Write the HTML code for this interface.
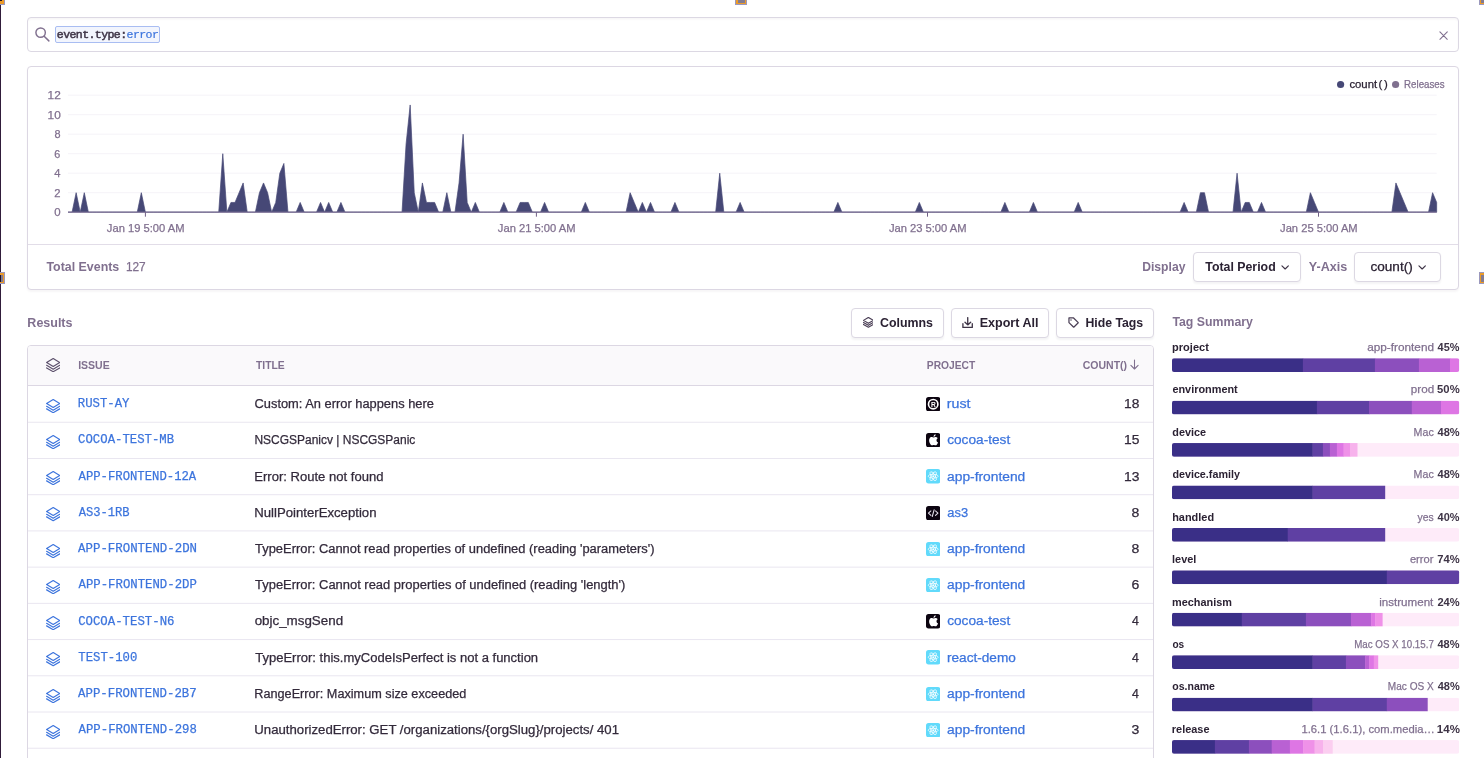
<!DOCTYPE html>
<html lang="en">
<head>
<meta charset="utf-8">
<title>Discover</title>
<style>
*{box-sizing:border-box;margin:0;padding:0}
html,body{width:1484px;height:758px;overflow:hidden;background:#fff}
body{font-family:"Liberation Sans",Arial,sans-serif;color:#2b2233;position:relative}
#root{position:absolute;left:0;top:0;width:1484px;height:758px;overflow:hidden;background:#fff;will-change:transform}
.abs{position:absolute}
.abs svg{display:block}
.t{position:absolute;height:16px;white-space:nowrap;transform-origin:0 50%}
.t b{font-weight:bold}
.edge{position:absolute;left:0;top:0;width:1px;height:758px;background:#301c3a}
.h{position:absolute;background:#ec9b28;border:1px solid #9a98bd}
.h i{position:absolute;background:#837b90;display:block}
.search{position:absolute;left:27px;top:17px;width:1432px;height:35px;border:1px solid #dcd8e3;border-radius:4px;background:#fff;box-shadow:inset 0 1.5px 2px rgba(43,34,51,0.04)}
.tok{position:absolute;left:55.2px;top:25.6px;width:104.4px;height:17.3px;border:1px solid #a9bdf2;border-radius:2px;background:#f2f5fd}
.panel{position:absolute;left:27px;top:66px;width:1432px;height:224px;border:1px solid #dcd7e3;border-radius:4px;background:#fff;box-shadow:0 1.5px 2px rgba(43,34,51,0.04)}
.pdiv{position:absolute;left:28px;top:244px;width:1430px;height:1px;background:#e2dde8}
.chart{position:absolute;left:0;top:0}
.btn{position:absolute;height:30px;border:1px solid #dcd8e3;border-radius:4px;background:#fff;box-shadow:0 1.5px 2px rgba(43,34,51,0.05)}
.btn svg{position:absolute}
.table{position:absolute;left:27px;top:345px;width:1127px;height:430px;border:1px solid #dcd7e3;border-radius:4px 4px 0 0;background:#fff}
.thead{position:absolute;left:28px;top:346px;width:1125px;height:40px;background:#faf9fb;border-bottom:1px solid #dcd7e3;border-radius:3px 3px 0 0}
.rl{position:absolute;left:28px;width:1125px;height:1px;background:#ebe8f0;margin-top:-0.5px}
.bar{position:absolute;left:1172px;width:287.2px;height:13.6px;background:#feebf9;border-radius:2px;overflow:hidden}
.bar i{position:absolute;top:0;height:13.6px;display:block}
</style>
</head>
<body>
<div id="root">
<div class="edge"></div>

<!-- selection handles from the capture tool -->
<div class="h" style="left:-2px;top:-3px;width:7px;height:7.5px"><i style="left:0;top:0;width:3px;height:3px;background:#1b1226"></i></div>
<div class="h" style="left:735px;top:-3px;width:12px;height:7.5px"><i style="left:2px;top:0;width:7px;height:4.6px"></i></div>
<div class="h" style="left:1479px;top:-3px;width:8px;height:7.5px"><i style="left:1px;top:0;width:6px;height:4.6px"></i></div>
<div class="h" style="left:-3px;top:272px;width:8px;height:12px"><i style="left:0;top:2px;width:3px;height:7px;background:#1b1226"></i><i style="left:3px;top:2px;width:2px;height:7px"></i></div>
<div class="h" style="left:1479px;top:272px;width:8px;height:12px"><i style="left:1px;top:2px;width:6px;height:7px"></i></div>

<!-- search -->
<div class="search"></div>
<svg class="abs" style="left:35.2px;top:27px" width="14.5" height="14.5" viewBox="0 0 16 16" fill="none" stroke="#80708f" stroke-width="1.6" stroke-linecap="round"><circle cx="6.2" cy="6.2" r="5.2"/><path d="M10.1 10.1 L15.3 15.3"/></svg>
<div class="tok"></div>
<span id="t84" class="t" style="left:56px;top:27px;font:normal 11.6px/16px 'Liberation Mono',monospace;color:#3e3446;transform:translateX(0.81px) scaleX(0.9971);letter-spacing:-0.6px;-webkit-text-stroke:0.25px #3e3446;"><span style="-webkit-text-stroke:0.5px #3e3446">event.type:</span><span style="color:#3c74dd;-webkit-text-stroke:0.2px #3c74dd">error</span></span>
<svg class="abs" style="left:1438.5px;top:31px" width="9.2" height="9.2" viewBox="0 0 10 10" fill="none" stroke="#80708f" stroke-width="1.2" stroke-linecap="round"><path d="M1 1 L9 9 M9 1 L1 9"/></svg>

<!-- chart panel -->
<div class="panel"></div>
<div class="pdiv"></div>
<svg class="chart" width="1484" height="250" viewBox="0 0 1484 250">
<line x1="68.0" x2="1436.7" y1="192.7" y2="192.7" stroke="#f5f3f8" stroke-width="1"/><line x1="68.0" x2="1436.7" y1="173.2" y2="173.2" stroke="#f5f3f8" stroke-width="1"/><line x1="68.0" x2="1436.7" y1="153.7" y2="153.7" stroke="#f5f3f8" stroke-width="1"/><line x1="68.0" x2="1436.7" y1="134.2" y2="134.2" stroke="#f5f3f8" stroke-width="1"/><line x1="68.0" x2="1436.7" y1="114.7" y2="114.7" stroke="#f5f3f8" stroke-width="1"/><line x1="68.0" x2="1436.7" y1="95.2" y2="95.2" stroke="#f5f3f8" stroke-width="1"/>
<path d="M68.00,212.20 L68.00,212.20 L72.07,212.20 L76.15,192.70 L80.22,212.20 L84.29,192.70 L88.37,212.20 L92.44,212.20 L96.51,212.20 L100.59,212.20 L104.66,212.20 L108.73,212.20 L112.81,212.20 L116.88,212.20 L120.95,212.20 L125.03,212.20 L129.10,212.20 L133.17,212.20 L137.25,212.20 L141.32,192.70 L145.39,212.20 L149.47,212.20 L153.54,212.20 L157.61,212.20 L161.69,212.20 L165.76,212.20 L169.84,212.20 L173.91,212.20 L177.98,212.20 L182.06,212.20 L186.13,212.20 L190.20,212.20 L194.28,212.20 L198.35,212.20 L202.42,212.20 L206.50,212.20 L210.57,212.20 L214.64,212.20 L218.72,212.20 L222.79,153.70 L226.86,212.20 L230.94,202.45 L235.01,202.45 L239.08,192.70 L243.16,182.95 L247.23,212.20 L251.30,212.20 L255.38,212.20 L259.45,192.70 L263.52,182.95 L267.60,192.70 L271.67,212.20 L275.74,202.45 L279.82,173.20 L283.89,163.45 L287.96,212.20 L292.04,212.20 L296.11,212.20 L300.18,202.45 L304.26,212.20 L308.33,212.20 L312.40,212.20 L316.48,212.20 L320.55,202.45 L324.62,212.20 L328.70,202.45 L332.77,212.20 L336.84,212.20 L340.92,202.45 L344.99,212.20 L349.06,212.20 L353.14,212.20 L357.21,212.20 L361.28,212.20 L365.36,212.20 L369.43,212.20 L373.51,212.20 L377.58,212.20 L381.65,212.20 L385.73,212.20 L389.80,212.20 L393.87,212.20 L397.95,212.20 L402.02,212.20 L406.09,143.95 L410.17,104.95 L414.24,192.70 L418.31,212.20 L422.39,182.95 L426.46,202.45 L430.53,202.45 L434.61,202.45 L438.68,212.20 L442.75,212.20 L446.83,192.70 L450.90,212.20 L454.97,212.20 L459.05,182.95 L463.12,134.20 L467.19,202.45 L471.27,212.20 L475.34,202.45 L479.41,212.20 L483.49,212.20 L487.56,212.20 L491.63,212.20 L495.71,212.20 L499.78,212.20 L503.85,202.45 L507.93,212.20 L512.00,212.20 L516.07,212.20 L520.15,202.45 L524.22,202.45 L528.29,202.45 L532.37,212.20 L536.44,212.20 L540.51,212.20 L544.59,202.45 L548.66,212.20 L552.73,212.20 L556.81,212.20 L560.88,212.20 L564.95,212.20 L569.03,212.20 L573.10,212.20 L577.18,212.20 L581.25,212.20 L585.32,202.45 L589.40,212.20 L593.47,212.20 L597.54,212.20 L601.62,212.20 L605.69,212.20 L609.76,212.20 L613.84,212.20 L617.91,212.20 L621.98,212.20 L626.06,212.20 L630.13,192.70 L634.20,202.45 L638.28,212.20 L642.35,202.45 L646.42,212.20 L650.50,202.45 L654.57,212.20 L658.64,212.20 L662.72,212.20 L666.79,212.20 L670.86,212.20 L674.94,202.45 L679.01,212.20 L683.08,212.20 L687.16,212.20 L691.23,212.20 L695.30,212.20 L699.38,212.20 L703.45,212.20 L707.52,212.20 L711.60,212.20 L715.67,212.20 L719.74,173.20 L723.82,212.20 L727.89,212.20 L731.96,212.20 L736.04,212.20 L740.11,202.45 L744.18,212.20 L748.26,212.20 L752.33,212.20 L756.40,212.20 L760.48,212.20 L764.55,212.20 L768.62,212.20 L772.70,212.20 L776.77,212.20 L780.85,212.20 L784.92,212.20 L788.99,212.20 L793.07,212.20 L797.14,212.20 L801.21,212.20 L805.29,212.20 L809.36,212.20 L813.43,212.20 L817.51,212.20 L821.58,212.20 L825.65,212.20 L829.73,212.20 L833.80,212.20 L837.87,202.45 L841.95,212.20 L846.02,212.20 L850.09,212.20 L854.17,212.20 L858.24,212.20 L862.31,212.20 L866.39,212.20 L870.46,212.20 L874.53,212.20 L878.61,212.20 L882.68,212.20 L886.75,212.20 L890.83,212.20 L894.90,212.20 L898.97,212.20 L903.05,212.20 L907.12,212.20 L911.19,212.20 L915.27,212.20 L919.34,202.45 L923.41,212.20 L927.49,212.20 L931.56,212.20 L935.63,212.20 L939.71,212.20 L943.78,212.20 L947.85,212.20 L951.93,212.20 L956.00,212.20 L960.07,212.20 L964.15,212.20 L968.22,212.20 L972.29,212.20 L976.37,212.20 L980.44,212.20 L984.52,212.20 L988.59,212.20 L992.66,212.20 L996.74,212.20 L1000.81,212.20 L1004.88,202.45 L1008.96,212.20 L1013.03,212.20 L1017.10,212.20 L1021.18,212.20 L1025.25,212.20 L1029.32,212.20 L1033.40,202.45 L1037.47,212.20 L1041.54,212.20 L1045.62,212.20 L1049.69,212.20 L1053.76,212.20 L1057.84,212.20 L1061.91,212.20 L1065.98,212.20 L1070.06,212.20 L1074.13,212.20 L1078.20,202.45 L1082.28,212.20 L1086.35,212.20 L1090.42,212.20 L1094.50,212.20 L1098.57,212.20 L1102.64,212.20 L1106.72,212.20 L1110.79,212.20 L1114.86,212.20 L1118.94,212.20 L1123.01,212.20 L1127.08,212.20 L1131.16,212.20 L1135.23,212.20 L1139.30,212.20 L1143.38,212.20 L1147.45,212.20 L1151.52,212.20 L1155.60,212.20 L1159.67,212.20 L1163.74,212.20 L1167.82,212.20 L1171.89,212.20 L1175.96,212.20 L1180.04,212.20 L1184.11,202.45 L1188.19,212.20 L1192.26,212.20 L1196.33,212.20 L1200.41,192.70 L1204.48,192.70 L1208.55,212.20 L1212.63,212.20 L1216.70,212.20 L1220.77,212.20 L1224.85,212.20 L1228.92,212.20 L1232.99,212.20 L1237.07,173.20 L1241.14,212.20 L1245.21,202.45 L1249.29,202.45 L1253.36,212.20 L1257.43,212.20 L1261.51,202.45 L1265.58,212.20 L1269.65,212.20 L1273.73,212.20 L1277.80,212.20 L1281.87,212.20 L1285.95,212.20 L1290.02,212.20 L1294.09,212.20 L1298.17,212.20 L1302.24,212.20 L1306.31,212.20 L1310.39,192.70 L1314.46,202.45 L1318.53,212.20 L1322.61,212.20 L1326.68,212.20 L1330.75,212.20 L1334.83,212.20 L1338.90,212.20 L1342.97,212.20 L1347.05,212.20 L1351.12,212.20 L1355.19,212.20 L1359.27,212.20 L1363.34,212.20 L1367.41,212.20 L1371.49,212.20 L1375.56,212.20 L1379.63,212.20 L1383.71,212.20 L1387.78,212.20 L1391.86,212.20 L1395.93,182.95 L1400.00,192.70 L1404.08,202.45 L1408.15,212.20 L1412.22,212.20 L1416.30,212.20 L1420.37,212.20 L1424.44,212.20 L1428.52,212.20 L1432.59,192.70 L1436.66,202.45 L1436.66,212.20 Z" fill="#464876" stroke="#464876" stroke-width="0.7" stroke-linejoin="miter" stroke-miterlimit="6"/>
<line x1="68.0" x2="1436.7" y1="212.2" y2="212.2" stroke="#8a7c9e" stroke-width="1"/>
<line x1="145.4" x2="145.4" y1="212.2" y2="216.7" stroke="#6f5f85" stroke-width="1"/><line x1="536.4" x2="536.4" y1="212.2" y2="216.7" stroke="#6f5f85" stroke-width="1"/><line x1="927.5" x2="927.5" y1="212.2" y2="216.7" stroke="#6f5f85" stroke-width="1"/><line x1="1318.5" x2="1318.5" y1="212.2" y2="216.7" stroke="#6f5f85" stroke-width="1"/>
<circle cx="1340.6" cy="84.5" r="3.6" fill="#464876"/>
<circle cx="1395.6" cy="84.5" r="3.6" fill="#80708f"/>
</svg>
<span id="t1" class="t" style="left:54px;top:204px;font:normal 11.2px/16px 'Liberation Sans',Arial,sans-serif;color:#80708f;transform:translateX(0.37px) scaleX(1.0225);-webkit-text-stroke:0.25px #80708f;">0</span>
<span id="t2" class="t" style="left:54px;top:185px;font:normal 11.2px/16px 'Liberation Sans',Arial,sans-serif;color:#80708f;transform:translateX(0.26px) scaleX(1.0024);-webkit-text-stroke:0.25px #80708f;">2</span>
<span id="t3" class="t" style="left:54px;top:165px;font:normal 11.2px/16px 'Liberation Sans',Arial,sans-serif;color:#80708f;transform:translateX(0.28px) scaleX(0.9993);-webkit-text-stroke:0.25px #80708f;">4</span>
<span id="t4" class="t" style="left:54px;top:146px;font:normal 11.2px/16px 'Liberation Sans',Arial,sans-serif;color:#80708f;transform:translateX(0.31px) scaleX(0.9653);-webkit-text-stroke:0.25px #80708f;">6</span>
<span id="t5" class="t" style="left:54px;top:126px;font:normal 11.2px/16px 'Liberation Sans',Arial,sans-serif;color:#80708f;transform:translateX(0.51px) scaleX(0.9729);-webkit-text-stroke:0.25px #80708f;">8</span>
<span id="t6" class="t" style="left:47px;top:107px;font:normal 11.2px/16px 'Liberation Sans',Arial,sans-serif;color:#80708f;transform:translateX(0.54px) scaleX(1.0586);-webkit-text-stroke:0.25px #80708f;">10</span>
<span id="t7" class="t" style="left:47px;top:87px;font:normal 11.2px/16px 'Liberation Sans',Arial,sans-serif;color:#80708f;transform:translateX(0.61px) scaleX(1.0580);-webkit-text-stroke:0.25px #80708f;">12</span>
<span id="t8" class="t" style="left:106px;top:220px;font:normal 11.0px/16px 'Liberation Sans',Arial,sans-serif;color:#80708f;transform:translateX(0.86px) scaleX(1.0152);-webkit-text-stroke:0.25px #80708f;">Jan 19 5:00 AM</span>
<span id="t9" class="t" style="left:497px;top:220px;font:normal 11.0px/16px 'Liberation Sans',Arial,sans-serif;color:#80708f;transform:translateX(0.86px) scaleX(1.0161);-webkit-text-stroke:0.25px #80708f;">Jan 21 5:00 AM</span>
<span id="t10" class="t" style="left:888px;top:220px;font:normal 11.0px/16px 'Liberation Sans',Arial,sans-serif;color:#80708f;transform:translateX(0.89px) scaleX(1.0156);-webkit-text-stroke:0.25px #80708f;">Jan 23 5:00 AM</span>
<span id="t11" class="t" style="left:1280px;top:220px;font:normal 11.0px/16px 'Liberation Sans',Arial,sans-serif;color:#80708f;transform:translateX(0.08px) scaleX(1.0149);-webkit-text-stroke:0.25px #80708f;">Jan 25 5:00 AM</span>
<span id="t12" class="t" style="left:1349px;top:77px;font:normal 10.4px/16px 'Liberation Sans',Arial,sans-serif;color:#2b2233;transform:translateX(0.41px) scaleX(1.0898);-webkit-text-stroke:0.25px #2b2233;">count<span style="letter-spacing:1.6px;margin-left:1.2px">()</span></span>
<span id="t13" class="t" style="left:1404px;top:77px;font:normal 10.4px/16px 'Liberation Sans',Arial,sans-serif;color:#80708f;transform:translateX(0.09px) scaleX(0.9352);-webkit-text-stroke:0.25px #80708f;">Releases</span>

<span id="t85" class="t" style="left:46px;top:259px;font:bold 12.0px/16px 'Liberation Sans',Arial,sans-serif;color:#80708f;transform:translateX(0.47px) scaleX(1.0329);">Total Events</span>
<span id="t86" class="t" style="left:125px;top:259px;font:normal 12.0px/16px 'Liberation Sans',Arial,sans-serif;color:#80708f;transform:translateX(0.89px) scaleX(0.9878);-webkit-text-stroke:0.25px #80708f;">127</span>
<span id="t87" class="t" style="left:1142px;top:259px;font:bold 12.1px/16px 'Liberation Sans',Arial,sans-serif;color:#80708f;transform:translateX(0.23px) scaleX(1.0036);">Display</span>
<div class="btn" style="left:1193px;top:252px;width:108px"><svg style="left:87.0px;top:12.3px" width="8.3" height="4.8" viewBox="0 0 10 6" fill="none" stroke="#3e3446" stroke-width="1.45" stroke-linecap="round" stroke-linejoin="round"><path d="M1 1 L5 5 L9 1"/></svg></div>
<span id="t88" class="t" style="left:1205px;top:259px;font:bold 12.0px/16px 'Liberation Sans',Arial,sans-serif;color:#2b2233;transform:translateX(0.28px) scaleX(1.0285);">Total Period</span>
<span id="t89" class="t" style="left:1308px;top:259px;font:bold 12.1px/16px 'Liberation Sans',Arial,sans-serif;color:#80708f;transform:translateX(0.78px) scaleX(1.0401);">Y-Axis</span>
<div class="btn" style="left:1354px;top:252px;width:87px"><svg style="left:63.2px;top:12.3px" width="8.3" height="4.8" viewBox="0 0 10 6" fill="none" stroke="#3e3446" stroke-width="1.45" stroke-linecap="round" stroke-linejoin="round"><path d="M1 1 L5 5 L9 1"/></svg></div>
<span id="t90" class="t" style="left:1370px;top:259px;font:normal 12.0px/16px 'Liberation Sans',Arial,sans-serif;color:#2b2233;transform:translateX(0.46px) scaleX(1.1305);-webkit-text-stroke:0.25px #2b2233;">count()</span>

<!-- results header -->
<span id="t91" class="t" style="left:27px;top:315px;font:bold 12.0px/16px 'Liberation Sans',Arial,sans-serif;color:#80708f;transform:translateX(0.36px) scaleX(1.0406);">Results</span>
<div class="btn" style="left:851px;top:308px;width:93px"><svg style="left:10.5px;top:7.9px" viewBox="0 0 16 16" width="10.8" height="10.8" fill="none" stroke="#4a3e55" stroke-width="1.7" stroke-linejoin="round" stroke-linecap="round"><path d="M8 0.6 L15.3 5 L8 9.4 L0.7 5 Z"/><path d="M0.7 8.1 L8 12.4 L15.3 8.1"/><path d="M0.7 11 L8 15.2 L15.3 11"/></svg></div>
<span id="t92" class="t" style="left:879px;top:315px;font:bold 12.1px/16px 'Liberation Sans',Arial,sans-serif;color:#2b2233;transform:translateX(0.99px) scaleX(1.0245);">Columns</span>
<div class="btn" style="left:951px;top:308px;width:98px"><svg style="left:9.9px;top:7.7px" width="11.2" height="11.2" viewBox="0 0 16 16" fill="none" stroke="#3e3446" stroke-width="1.9" stroke-linecap="round" stroke-linejoin="round"><path d="M8.2 0.9 L8.2 11.2 M4.3 7.4 L8.2 11.3 L12.4 7.4 M1.3 9.5 L1.3 15 L14.7 15 L14.7 9.5"/></svg></div>
<span id="t93" class="t" style="left:979px;top:315px;font:bold 12.1px/16px 'Liberation Sans',Arial,sans-serif;color:#2b2233;transform:translateX(0.64px) scaleX(1.0380);">Export All</span>
<div class="btn" style="left:1056px;top:308px;width:98px"><svg style="left:10.6px;top:7.7px" width="11" height="11" viewBox="0 0 16 16" fill="none" stroke="#4a3f55" stroke-width="1.8" stroke-linecap="round" stroke-linejoin="round"><path d="M1.4 1.4 L8.1 1.4 L14.6 7.9 Q15 8.3 14.6 8.7 L8.7 14.6 Q8.3 15 7.9 14.6 L1.4 8.1 Z"/><circle cx="4.4" cy="4.5" r="1.1" fill="#4a3f55" stroke="none"/></svg></div>
<span id="t94" class="t" style="left:1085px;top:315px;font:bold 12.1px/16px 'Liberation Sans',Arial,sans-serif;color:#2b2233;transform:translateX(0.39px) scaleX(1.0156);">Hide Tags</span>

<!-- table -->
<div class="table"></div>
<div class="thead"></div>
<div class="abs" style="left:45.8px;top:357.7px"><svg viewBox="0 0 16 16" width="14.4" height="14.4" fill="none" stroke="#5b4f6b" stroke-width="1.3" stroke-linejoin="round" stroke-linecap="round"><path d="M8 0.6 L15.3 5 L8 9.4 L0.7 5 Z"/><path d="M0.7 8.1 L8 12.4 L15.3 8.1"/><path d="M0.7 11 L8 15.2 L15.3 11"/></svg></div>
<span id="t95" class="t" style="left:78px;top:357px;font:bold 11px/16px 'Liberation Sans',Arial,sans-serif;color:#80708f;transform:translateX(0.15px) scaleX(0.9567);">ISSUE</span>
<span id="t96" class="t" style="left:255px;top:357px;font:bold 11px/16px 'Liberation Sans',Arial,sans-serif;color:#80708f;transform:translateX(0.94px) scaleX(0.9400);">TITLE</span>
<span id="t97" class="t" style="left:926px;top:357px;font:bold 11px/16px 'Liberation Sans',Arial,sans-serif;color:#80708f;transform:translateX(0.85px) scaleX(0.9315);">PROJECT</span>
<span id="t98" class="t" style="left:1082px;top:357px;font:bold 11px/16px 'Liberation Sans',Arial,sans-serif;color:#80708f;transform:translateX(0.67px) scaleX(0.9558);">COUNT()</span>
<svg class="abs" style="left:1129.6px;top:359px" width="9" height="11" viewBox="0 0 10 12" fill="none" stroke="#80708f" stroke-width="1.2" stroke-linecap="round" stroke-linejoin="round"><path d="M5 1 L5 11 M1 7 L5 11 L9 7"/></svg>
<div class="abs" style="left:45.8px;top:398.7px"><svg viewBox="0 0 16 16" width="14.4" height="14.4" fill="none" stroke="#3c74dd" stroke-width="1.35" stroke-linejoin="round" stroke-linecap="round"><path d="M8 0.6 L15.3 5 L8 9.4 L0.7 5 Z"/><path d="M0.7 8.1 L8 12.4 L15.3 8.1"/><path d="M0.7 11 L8 15.2 L15.3 11"/></svg></div>
<span id="t14" class="t" style="left:77px;top:396px;font:normal 13.1px/16px 'Liberation Mono',monospace;color:#3c74dd;transform:translateX(0.82px) scaleX(0.9386);-webkit-text-stroke:0.25px #3c74dd;">RUST-AY</span>
<span id="t15" class="t" style="left:254px;top:396px;font:normal 12.5px/16px 'Liberation Sans',Arial,sans-serif;color:#332a3b;transform:translateX(0.55px) scaleX(1.0282);-webkit-text-stroke:0.25px #332a3b;">Custom: An error happens here</span>
<div class="abs" style="left:926.1px;top:396.9px"><svg viewBox="0 0 20 20" width="14.4" height="14.4"><rect width="20" height="20" rx="3.6" fill="#0c0410"/><circle cx="10" cy="10" r="6.5" fill="none" stroke="#fff" stroke-width="2.3"/><text x="10.1" y="13.3" text-anchor="middle" font-family="Liberation Sans, sans-serif" font-weight="bold" font-size="9.2" fill="#fff">R</text></svg></div>
<span id="t16" class="t" style="left:946px;top:396px;font:normal 12.5px/16px 'Liberation Sans',Arial,sans-serif;color:#3c74dd;transform:translateX(0.87px) scaleX(1.1373);-webkit-text-stroke:0.25px #3c74dd;">rust</span>
<span id="t17" class="t" style="left:1124px;top:396px;font:normal 12.5px/16px 'Liberation Sans',Arial,sans-serif;color:#332a3b;transform:translateX(0.02px) scaleX(1.1019);-webkit-text-stroke:0.25px #332a3b;">18</span>
<div class="abs" style="left:45.8px;top:434.9px"><svg viewBox="0 0 16 16" width="14.4" height="14.4" fill="none" stroke="#3c74dd" stroke-width="1.35" stroke-linejoin="round" stroke-linecap="round"><path d="M8 0.6 L15.3 5 L8 9.4 L0.7 5 Z"/><path d="M0.7 8.1 L8 12.4 L15.3 8.1"/><path d="M0.7 11 L8 15.2 L15.3 11"/></svg></div>
<span id="t18" class="t" style="left:78px;top:432px;font:normal 13.1px/16px 'Liberation Mono',monospace;color:#3c74dd;transform:translateX(0.09px) scaleX(0.9398);-webkit-text-stroke:0.25px #3c74dd;">COCOA-TEST-MB</span>
<span id="t19" class="t" style="left:254px;top:432px;font:normal 12.5px/16px 'Liberation Sans',Arial,sans-serif;color:#332a3b;transform:translateX(0.42px) scaleX(0.9584);-webkit-text-stroke:0.25px #332a3b;">NSCGSPanicv | NSCGSPanic</span>
<div class="abs" style="left:926.1px;top:433.1px"><svg viewBox="0 0 20 20" width="14.4" height="14.4"><rect width="20" height="20" rx="3.6" fill="#0c0410"/><path fill="#fff" transform="translate(10 10) scale(1.2) translate(-10.1 -10.55)" d="M13.9 10.6c0-1.6 1.3-2.3 1.4-2.4-.8-1.1-1.9-1.3-2.3-1.3-1-.1-1.9.6-2.4.6-.5 0-1.2-.6-2.1-.6-1.1 0-2.1.6-2.6 1.6-1.1 1.9-.3 4.8.8 6.4.5.8 1.2 1.6 2 1.6.8 0 1.1-.5 2.1-.5s1.2.5 2.1.5c.9 0 1.4-.8 1.9-1.6.6-.9.9-1.7.9-1.8-.1 0-1.8-.700-1.8-2.5zM12.3 5.8c.4-.5.7-1.3.6-2-.6 0-1.4.4-1.8.9-.4.5-.8 1.2-.7 1.9.7.1 1.4-.300 1.9-.800z"/></svg></div>
<span id="t20" class="t" style="left:947px;top:432px;font:normal 12.5px/16px 'Liberation Sans',Arial,sans-serif;color:#3c74dd;transform:translateX(0.19px) scaleX(1.0934);-webkit-text-stroke:0.25px #3c74dd;">cocoa-test</span>
<span id="t21" class="t" style="left:1123px;top:432px;font:normal 12.5px/16px 'Liberation Sans',Arial,sans-serif;color:#332a3b;transform:translateX(0.97px) scaleX(1.1057);-webkit-text-stroke:0.25px #332a3b;">15</span>
<div class="abs" style="left:45.8px;top:471.1px"><svg viewBox="0 0 16 16" width="14.4" height="14.4" fill="none" stroke="#3c74dd" stroke-width="1.35" stroke-linejoin="round" stroke-linecap="round"><path d="M8 0.6 L15.3 5 L8 9.4 L0.7 5 Z"/><path d="M0.7 8.1 L8 12.4 L15.3 8.1"/><path d="M0.7 11 L8 15.2 L15.3 11"/></svg></div>
<span id="t22" class="t" style="left:78px;top:469px;font:normal 13.1px/16px 'Liberation Mono',monospace;color:#3c74dd;transform:translateX(0.56px) scaleX(0.9356);-webkit-text-stroke:0.25px #3c74dd;">APP-FRONTEND-12A</span>
<span id="t23" class="t" style="left:254px;top:469px;font:normal 12.5px/16px 'Liberation Sans',Arial,sans-serif;color:#332a3b;transform:translateX(0.23px) scaleX(1.0448);-webkit-text-stroke:0.25px #332a3b;">Error: Route not found</span>
<div class="abs" style="left:926.1px;top:469.3px"><svg viewBox="0 0 20 20" width="14.4" height="14.4"><rect width="20" height="20" rx="3.6" fill="#61dafb"/><g fill="none" stroke="#fff" stroke-width="1"><ellipse cx="10" cy="10" rx="7" ry="2.7"/><ellipse cx="10" cy="10" rx="7" ry="2.7" transform="rotate(60 10 10)"/><ellipse cx="10" cy="10" rx="7" ry="2.7" transform="rotate(120 10 10)"/></g><circle cx="10" cy="10" r="1.3" fill="#fff"/></svg></div>
<span id="t24" class="t" style="left:947px;top:469px;font:normal 12.5px/16px 'Liberation Sans',Arial,sans-serif;color:#3c74dd;transform:translateX(0.10px) scaleX(1.1029);-webkit-text-stroke:0.25px #3c74dd;">app-frontend</span>
<span id="t25" class="t" style="left:1123px;top:469px;font:normal 12.5px/16px 'Liberation Sans',Arial,sans-serif;color:#332a3b;transform:translateX(0.95px) scaleX(1.1088);-webkit-text-stroke:0.25px #332a3b;">13</span>
<div class="abs" style="left:45.8px;top:507.4px"><svg viewBox="0 0 16 16" width="14.4" height="14.4" fill="none" stroke="#3c74dd" stroke-width="1.35" stroke-linejoin="round" stroke-linecap="round"><path d="M8 0.6 L15.3 5 L8 9.4 L0.7 5 Z"/><path d="M0.7 8.1 L8 12.4 L15.3 8.1"/><path d="M0.7 11 L8 15.2 L15.3 11"/></svg></div>
<span id="t26" class="t" style="left:78px;top:505px;font:normal 13.1px/16px 'Liberation Mono',monospace;color:#3c74dd;transform:translateX(0.64px) scaleX(0.9266);-webkit-text-stroke:0.25px #3c74dd;">AS3-1RB</span>
<span id="t27" class="t" style="left:254px;top:505px;font:normal 12.5px/16px 'Liberation Sans',Arial,sans-serif;color:#332a3b;transform:translateX(0.22px) scaleX(1.0537);-webkit-text-stroke:0.25px #332a3b;">NullPointerException</span>
<div class="abs" style="left:926.1px;top:505.6px"><svg viewBox="0 0 20 20" width="14.4" height="14.4"><rect width="20" height="20" rx="3.6" fill="#0c0410"/><g fill="none" stroke="#e4dfea" stroke-width="1.5" stroke-linecap="round" stroke-linejoin="round"><path d="M6.8 6.9 L3.4 10 L6.8 13.1"/><path d="M13.2 6.9 L16.6 10 L13.2 13.1"/><path d="M11.3 5.4 L8.7 14.6"/></g></svg></div>
<span id="t28" class="t" style="left:947px;top:505px;font:normal 12.5px/16px 'Liberation Sans',Arial,sans-serif;color:#3c74dd;transform:translateX(0.33px) scaleX(1.0300);-webkit-text-stroke:0.25px #3c74dd;">as3</span>
<span id="t29" class="t" style="left:1131px;top:505px;font:normal 12.5px/16px 'Liberation Sans',Arial,sans-serif;color:#332a3b;transform:translateX(0.58px) scaleX(1.1232);-webkit-text-stroke:0.25px #332a3b;">8</span>
<div class="abs" style="left:45.8px;top:543.6px"><svg viewBox="0 0 16 16" width="14.4" height="14.4" fill="none" stroke="#3c74dd" stroke-width="1.35" stroke-linejoin="round" stroke-linecap="round"><path d="M8 0.6 L15.3 5 L8 9.4 L0.7 5 Z"/><path d="M0.7 8.1 L8 12.4 L15.3 8.1"/><path d="M0.7 11 L8 15.2 L15.3 11"/></svg></div>
<span id="t30" class="t" style="left:78px;top:541px;font:normal 13.1px/16px 'Liberation Mono',monospace;color:#3c74dd;transform:translateX(0.09px) scaleX(0.9462);-webkit-text-stroke:0.25px #3c74dd;">APP-FRONTEND-2DN</span>
<span id="t31" class="t" style="left:255px;top:541px;font:normal 12.5px/16px 'Liberation Sans',Arial,sans-serif;color:#332a3b;transform:translateX(0.07px) scaleX(1.0322);-webkit-text-stroke:0.25px #332a3b;">TypeError: Cannot read properties of undefined (reading 'parameters')</span>
<div class="abs" style="left:926.1px;top:541.8px"><svg viewBox="0 0 20 20" width="14.4" height="14.4"><rect width="20" height="20" rx="3.6" fill="#61dafb"/><g fill="none" stroke="#fff" stroke-width="1"><ellipse cx="10" cy="10" rx="7" ry="2.7"/><ellipse cx="10" cy="10" rx="7" ry="2.7" transform="rotate(60 10 10)"/><ellipse cx="10" cy="10" rx="7" ry="2.7" transform="rotate(120 10 10)"/></g><circle cx="10" cy="10" r="1.3" fill="#fff"/></svg></div>
<span id="t32" class="t" style="left:947px;top:541px;font:normal 12.5px/16px 'Liberation Sans',Arial,sans-serif;color:#3c74dd;transform:translateX(0.10px) scaleX(1.1029);-webkit-text-stroke:0.25px #3c74dd;">app-frontend</span>
<span id="t33" class="t" style="left:1131px;top:541px;font:normal 12.5px/16px 'Liberation Sans',Arial,sans-serif;color:#332a3b;transform:translateX(0.58px) scaleX(1.1232);-webkit-text-stroke:0.25px #332a3b;">8</span>
<div class="abs" style="left:45.8px;top:579.8px"><svg viewBox="0 0 16 16" width="14.4" height="14.4" fill="none" stroke="#3c74dd" stroke-width="1.35" stroke-linejoin="round" stroke-linecap="round"><path d="M8 0.6 L15.3 5 L8 9.4 L0.7 5 Z"/><path d="M0.7 8.1 L8 12.4 L15.3 8.1"/><path d="M0.7 11 L8 15.2 L15.3 11"/></svg></div>
<span id="t34" class="t" style="left:78px;top:577px;font:normal 13.1px/16px 'Liberation Mono',monospace;color:#3c74dd;transform:translateX(0.56px) scaleX(0.9405);-webkit-text-stroke:0.25px #3c74dd;">APP-FRONTEND-2DP</span>
<span id="t35" class="t" style="left:255px;top:577px;font:normal 12.5px/16px 'Liberation Sans',Arial,sans-serif;color:#332a3b;transform:translateX(0.08px) scaleX(1.0348);-webkit-text-stroke:0.25px #332a3b;">TypeError: Cannot read properties of undefined (reading 'length')</span>
<div class="abs" style="left:926.1px;top:578.0px"><svg viewBox="0 0 20 20" width="14.4" height="14.4"><rect width="20" height="20" rx="3.6" fill="#61dafb"/><g fill="none" stroke="#fff" stroke-width="1"><ellipse cx="10" cy="10" rx="7" ry="2.7"/><ellipse cx="10" cy="10" rx="7" ry="2.7" transform="rotate(60 10 10)"/><ellipse cx="10" cy="10" rx="7" ry="2.7" transform="rotate(120 10 10)"/></g><circle cx="10" cy="10" r="1.3" fill="#fff"/></svg></div>
<span id="t36" class="t" style="left:947px;top:577px;font:normal 12.5px/16px 'Liberation Sans',Arial,sans-serif;color:#3c74dd;transform:translateX(0.10px) scaleX(1.1029);-webkit-text-stroke:0.25px #3c74dd;">app-frontend</span>
<span id="t37" class="t" style="left:1131px;top:577px;font:normal 12.5px/16px 'Liberation Sans',Arial,sans-serif;color:#332a3b;transform:translateX(0.62px) scaleX(1.1236);-webkit-text-stroke:0.25px #332a3b;">6</span>
<div class="abs" style="left:45.8px;top:616.0px"><svg viewBox="0 0 16 16" width="14.4" height="14.4" fill="none" stroke="#3c74dd" stroke-width="1.35" stroke-linejoin="round" stroke-linecap="round"><path d="M8 0.6 L15.3 5 L8 9.4 L0.7 5 Z"/><path d="M0.7 8.1 L8 12.4 L15.3 8.1"/><path d="M0.7 11 L8 15.2 L15.3 11"/></svg></div>
<span id="t38" class="t" style="left:78px;top:614px;font:normal 13.1px/16px 'Liberation Mono',monospace;color:#3c74dd;transform:translateX(0.15px) scaleX(0.9428);-webkit-text-stroke:0.25px #3c74dd;">COCOA-TEST-N6</span>
<span id="t39" class="t" style="left:254px;top:613px;font:normal 12.5px/16px 'Liberation Sans',Arial,sans-serif;color:#332a3b;transform:translateX(0.67px) scaleX(1.0691);-webkit-text-stroke:0.25px #332a3b;">objc_msgSend</span>
<div class="abs" style="left:926.1px;top:614.2px"><svg viewBox="0 0 20 20" width="14.4" height="14.4"><rect width="20" height="20" rx="3.6" fill="#0c0410"/><path fill="#fff" transform="translate(10 10) scale(1.2) translate(-10.1 -10.55)" d="M13.9 10.6c0-1.6 1.3-2.3 1.4-2.4-.8-1.1-1.9-1.3-2.3-1.3-1-.1-1.9.6-2.4.6-.5 0-1.2-.6-2.1-.6-1.1 0-2.1.6-2.6 1.6-1.1 1.9-.3 4.8.8 6.4.5.8 1.2 1.6 2 1.6.8 0 1.1-.5 2.1-.5s1.2.5 2.1.5c.9 0 1.4-.8 1.9-1.6.6-.9.9-1.7.9-1.8-.1 0-1.8-.700-1.8-2.5zM12.3 5.8c.4-.5.7-1.3.6-2-.6 0-1.4.4-1.8.9-.4.5-.8 1.2-.7 1.9.7.1 1.4-.300 1.9-.800z"/></svg></div>
<span id="t40" class="t" style="left:947px;top:613px;font:normal 12.5px/16px 'Liberation Sans',Arial,sans-serif;color:#3c74dd;transform:translateX(0.19px) scaleX(1.0934);-webkit-text-stroke:0.25px #3c74dd;">cocoa-test</span>
<span id="t41" class="t" style="left:1132px;top:613px;font:normal 12.5px/16px 'Liberation Sans',Arial,sans-serif;color:#332a3b;transform:translateX(0.08px) scaleX(0.9879);-webkit-text-stroke:0.25px #332a3b;">4</span>
<div class="abs" style="left:45.8px;top:652.2px"><svg viewBox="0 0 16 16" width="14.4" height="14.4" fill="none" stroke="#3c74dd" stroke-width="1.35" stroke-linejoin="round" stroke-linecap="round"><path d="M8 0.6 L15.3 5 L8 9.4 L0.7 5 Z"/><path d="M0.7 8.1 L8 12.4 L15.3 8.1"/><path d="M0.7 11 L8 15.2 L15.3 11"/></svg></div>
<span id="t42" class="t" style="left:78px;top:650px;font:normal 13.1px/16px 'Liberation Mono',monospace;color:#3c74dd;transform:translateX(0.29px) scaleX(0.9388);-webkit-text-stroke:0.25px #3c74dd;">TEST-100</span>
<span id="t43" class="t" style="left:255px;top:650px;font:normal 12.5px/16px 'Liberation Sans',Arial,sans-serif;color:#332a3b;transform:translateX(0.17px) scaleX(1.0416);-webkit-text-stroke:0.25px #332a3b;">TypeError: this.myCodeIsPerfect is not a function</span>
<div class="abs" style="left:926.1px;top:650.4px"><svg viewBox="0 0 20 20" width="14.4" height="14.4"><rect width="20" height="20" rx="3.6" fill="#61dafb"/><g fill="none" stroke="#fff" stroke-width="1"><ellipse cx="10" cy="10" rx="7" ry="2.7"/><ellipse cx="10" cy="10" rx="7" ry="2.7" transform="rotate(60 10 10)"/><ellipse cx="10" cy="10" rx="7" ry="2.7" transform="rotate(120 10 10)"/></g><circle cx="10" cy="10" r="1.3" fill="#fff"/></svg></div>
<span id="t44" class="t" style="left:946px;top:650px;font:normal 12.5px/16px 'Liberation Sans',Arial,sans-serif;color:#3c74dd;transform:translateX(0.92px) scaleX(1.0907);-webkit-text-stroke:0.25px #3c74dd;">react-demo</span>
<span id="t45" class="t" style="left:1132px;top:650px;font:normal 12.5px/16px 'Liberation Sans',Arial,sans-serif;color:#332a3b;transform:translateX(0.08px) scaleX(0.9879);-webkit-text-stroke:0.25px #332a3b;">4</span>
<div class="abs" style="left:45.8px;top:688.5px"><svg viewBox="0 0 16 16" width="14.4" height="14.4" fill="none" stroke="#3c74dd" stroke-width="1.35" stroke-linejoin="round" stroke-linecap="round"><path d="M8 0.6 L15.3 5 L8 9.4 L0.7 5 Z"/><path d="M0.7 8.1 L8 12.4 L15.3 8.1"/><path d="M0.7 11 L8 15.2 L15.3 11"/></svg></div>
<span id="t46" class="t" style="left:78px;top:686px;font:normal 13.1px/16px 'Liberation Mono',monospace;color:#3c74dd;transform:translateX(0.08px) scaleX(0.9431);-webkit-text-stroke:0.25px #3c74dd;">APP-FRONTEND-2B7</span>
<span id="t47" class="t" style="left:254px;top:686px;font:normal 12.5px/16px 'Liberation Sans',Arial,sans-serif;color:#332a3b;transform:translateX(0.32px) scaleX(1.0138);-webkit-text-stroke:0.25px #332a3b;">RangeError: Maximum size exceeded</span>
<div class="abs" style="left:926.1px;top:686.7px"><svg viewBox="0 0 20 20" width="14.4" height="14.4"><rect width="20" height="20" rx="3.6" fill="#61dafb"/><g fill="none" stroke="#fff" stroke-width="1"><ellipse cx="10" cy="10" rx="7" ry="2.7"/><ellipse cx="10" cy="10" rx="7" ry="2.7" transform="rotate(60 10 10)"/><ellipse cx="10" cy="10" rx="7" ry="2.7" transform="rotate(120 10 10)"/></g><circle cx="10" cy="10" r="1.3" fill="#fff"/></svg></div>
<span id="t48" class="t" style="left:947px;top:686px;font:normal 12.5px/16px 'Liberation Sans',Arial,sans-serif;color:#3c74dd;transform:translateX(0.10px) scaleX(1.1029);-webkit-text-stroke:0.25px #3c74dd;">app-frontend</span>
<span id="t49" class="t" style="left:1132px;top:686px;font:normal 12.5px/16px 'Liberation Sans',Arial,sans-serif;color:#332a3b;transform:translateX(0.08px) scaleX(0.9879);-webkit-text-stroke:0.25px #332a3b;">4</span>
<div class="abs" style="left:45.8px;top:724.7px"><svg viewBox="0 0 16 16" width="14.4" height="14.4" fill="none" stroke="#3c74dd" stroke-width="1.35" stroke-linejoin="round" stroke-linecap="round"><path d="M8 0.6 L15.3 5 L8 9.4 L0.7 5 Z"/><path d="M0.7 8.1 L8 12.4 L15.3 8.1"/><path d="M0.7 11 L8 15.2 L15.3 11"/></svg></div>
<span id="t50" class="t" style="left:78px;top:722px;font:normal 13.1px/16px 'Liberation Mono',monospace;color:#3c74dd;transform:translateX(0.59px) scaleX(0.9404);-webkit-text-stroke:0.25px #3c74dd;">APP-FRONTEND-298</span>
<span id="t51" class="t" style="left:254px;top:722px;font:normal 12.5px/16px 'Liberation Sans',Arial,sans-serif;color:#332a3b;transform:translateX(0.30px) scaleX(1.0546);-webkit-text-stroke:0.25px #332a3b;">UnauthorizedError: GET /organizations/{orgSlug}/projects/ 401</span>
<div class="abs" style="left:926.1px;top:722.9px"><svg viewBox="0 0 20 20" width="14.4" height="14.4"><rect width="20" height="20" rx="3.6" fill="#61dafb"/><g fill="none" stroke="#fff" stroke-width="1"><ellipse cx="10" cy="10" rx="7" ry="2.7"/><ellipse cx="10" cy="10" rx="7" ry="2.7" transform="rotate(60 10 10)"/><ellipse cx="10" cy="10" rx="7" ry="2.7" transform="rotate(120 10 10)"/></g><circle cx="10" cy="10" r="1.3" fill="#fff"/></svg></div>
<span id="t52" class="t" style="left:947px;top:722px;font:normal 12.5px/16px 'Liberation Sans',Arial,sans-serif;color:#3c74dd;transform:translateX(0.10px) scaleX(1.1029);-webkit-text-stroke:0.25px #3c74dd;">app-frontend</span>
<span id="t53" class="t" style="left:1131px;top:722px;font:normal 12.5px/16px 'Liberation Sans',Arial,sans-serif;color:#332a3b;transform:translateX(0.48px) scaleX(1.1251);-webkit-text-stroke:0.25px #332a3b;">3</span>

<svg class="abs" style="left:0;top:0" width="1484" height="758" viewBox="0 0 1484 758"><rect x="28" y="421.75" width="1125" height="1" fill="#e9e6f0"/><rect x="28" y="457.97" width="1125" height="1" fill="#e9e6f0"/><rect x="28" y="494.19" width="1125" height="1" fill="#e9e6f0"/><rect x="28" y="530.41" width="1125" height="1" fill="#e9e6f0"/><rect x="28" y="566.63" width="1125" height="1" fill="#e9e6f0"/><rect x="28" y="602.85" width="1125" height="1" fill="#e9e6f0"/><rect x="28" y="639.07" width="1125" height="1" fill="#e9e6f0"/><rect x="28" y="675.29" width="1125" height="1" fill="#e9e6f0"/><rect x="28" y="711.51" width="1125" height="1" fill="#e9e6f0"/><rect x="28" y="747.73" width="1125" height="1" fill="#e9e6f0"/></svg>
<!-- tag summary -->
<span id="t99" class="t" style="left:1172px;top:314px;font:bold 12px/16px 'Liberation Sans',Arial,sans-serif;color:#80708f;transform:translateX(0.39px) scaleX(1.0256);">Tag Summary</span>
<span id="t54" class="t" style="left:1172px;top:339px;font:bold 11.4px/16px 'Liberation Sans',Arial,sans-serif;color:#2b2233;transform:translateX(0.09px) scaleX(0.9675);">project</span>
<span id="t55" class="t" style="left:1367px;top:339px;font:normal 11.4px/16px 'Liberation Sans',Arial,sans-serif;color:#80708f;transform:translateX(0.20px) scaleX(1.0346);-webkit-text-stroke:0.25px #80708f;">app-frontend</span>
<span id="t56" class="t" style="left:1437px;top:339px;font:bold 11.4px/16px 'Liberation Sans',Arial,sans-serif;color:#3e3446;transform:translateX(0.60px) scaleX(0.9568);">45%</span>
<span id="t57" class="t" style="left:1172px;top:381px;font:bold 11.4px/16px 'Liberation Sans',Arial,sans-serif;color:#2b2233;transform:translateX(0.43px) scaleX(0.9547);">environment</span>
<span id="t58" class="t" style="left:1410px;top:381px;font:normal 11.4px/16px 'Liberation Sans',Arial,sans-serif;color:#80708f;transform:translateX(0.78px) scaleX(1.0244);-webkit-text-stroke:0.25px #80708f;">prod</span>
<span id="t59" class="t" style="left:1437px;top:381px;font:bold 11.4px/16px 'Liberation Sans',Arial,sans-serif;color:#3e3446;transform:translateX(0.11px) scaleX(0.9887);">50%</span>
<span id="t60" class="t" style="left:1172px;top:424px;font:bold 11.4px/16px 'Liberation Sans',Arial,sans-serif;color:#2b2233;transform:translateX(0.28px) scaleX(0.9535);">device</span>
<span id="t61" class="t" style="left:1413px;top:424px;font:normal 11.4px/16px 'Liberation Sans',Arial,sans-serif;color:#80708f;transform:translateX(0.60px) scaleX(0.9340);-webkit-text-stroke:0.25px #80708f;">Mac</span>
<span id="t62" class="t" style="left:1437px;top:424px;font:bold 11.4px/16px 'Liberation Sans',Arial,sans-serif;color:#3e3446;transform:translateX(0.58px) scaleX(0.9698);">48%</span>
<span id="t63" class="t" style="left:1172px;top:466px;font:bold 11.4px/16px 'Liberation Sans',Arial,sans-serif;color:#2b2233;transform:translateX(0.40px) scaleX(0.9430);">device.family</span>
<span id="t64" class="t" style="left:1413px;top:466px;font:normal 11.4px/16px 'Liberation Sans',Arial,sans-serif;color:#80708f;transform:translateX(0.60px) scaleX(0.9340);-webkit-text-stroke:0.25px #80708f;">Mac</span>
<span id="t65" class="t" style="left:1437px;top:466px;font:bold 11.4px/16px 'Liberation Sans',Arial,sans-serif;color:#3e3446;transform:translateX(0.58px) scaleX(0.9698);">48%</span>
<span id="t66" class="t" style="left:1172px;top:509px;font:bold 11.4px/16px 'Liberation Sans',Arial,sans-serif;color:#2b2233;transform:translateX(0.13px) scaleX(0.9605);">handled</span>
<span id="t67" class="t" style="left:1417px;top:509px;font:normal 11.4px/16px 'Liberation Sans',Arial,sans-serif;color:#80708f;transform:translateX(0.57px) scaleX(0.9135);-webkit-text-stroke:0.25px #80708f;">yes</span>
<span id="t68" class="t" style="left:1437px;top:509px;font:bold 11.4px/16px 'Liberation Sans',Arial,sans-serif;color:#3e3446;transform:translateX(0.60px) scaleX(0.9568);">40%</span>
<span id="t69" class="t" style="left:1172px;top:551px;font:bold 11.4px/16px 'Liberation Sans',Arial,sans-serif;color:#2b2233;transform:translateX(0.03px) scaleX(0.9579);">level</span>
<span id="t70" class="t" style="left:1409px;top:551px;font:normal 11.4px/16px 'Liberation Sans',Arial,sans-serif;color:#80708f;transform:translateX(0.93px) scaleX(0.9740);-webkit-text-stroke:0.25px #80708f;">error</span>
<span id="t71" class="t" style="left:1437px;top:551px;font:bold 11.4px/16px 'Liberation Sans',Arial,sans-serif;color:#3e3446;transform:translateX(0.32px) scaleX(0.9791);">74%</span>
<span id="t72" class="t" style="left:1172px;top:594px;font:bold 11.4px/16px 'Liberation Sans',Arial,sans-serif;color:#2b2233;transform:translateX(0.08px) scaleX(0.9553);">mechanism</span>
<span id="t73" class="t" style="left:1379px;top:594px;font:normal 11.4px/16px 'Liberation Sans',Arial,sans-serif;color:#80708f;transform:translateX(0.20px) scaleX(1.0174);-webkit-text-stroke:0.25px #80708f;">instrument</span>
<span id="t74" class="t" style="left:1437px;top:594px;font:bold 11.4px/16px 'Liberation Sans',Arial,sans-serif;color:#3e3446;transform:translateX(0.38px) scaleX(0.9744);">24%</span>
<span id="t75" class="t" style="left:1172px;top:636px;font:bold 11.4px/16px 'Liberation Sans',Arial,sans-serif;color:#2b2233;transform:translateX(0.38px) scaleX(0.8855);">os</span>
<span id="t76" class="t" style="left:1354px;top:636px;font:normal 11.4px/16px 'Liberation Sans',Arial,sans-serif;color:#80708f;transform:translateX(0.24px) scaleX(0.8549);-webkit-text-stroke:0.25px #80708f;">Mac OS X 10.15.7</span>
<span id="t77" class="t" style="left:1437px;top:636px;font:bold 11.4px/16px 'Liberation Sans',Arial,sans-serif;color:#3e3446;transform:translateX(0.44px) scaleX(0.9660);">48%</span>
<span id="t78" class="t" style="left:1172px;top:678px;font:bold 11.4px/16px 'Liberation Sans',Arial,sans-serif;color:#2b2233;transform:translateX(0.23px) scaleX(0.9250);">os.name</span>
<span id="t79" class="t" style="left:1387px;top:678px;font:normal 11.4px/16px 'Liberation Sans',Arial,sans-serif;color:#80708f;transform:translateX(0.86px) scaleX(0.8852);-webkit-text-stroke:0.25px #80708f;">Mac OS X</span>
<span id="t80" class="t" style="left:1437px;top:678px;font:bold 11.4px/16px 'Liberation Sans',Arial,sans-serif;color:#3e3446;transform:translateX(0.75px) scaleX(0.9636);">48%</span>
<span id="t81" class="t" style="left:1171px;top:721px;font:bold 11.4px/16px 'Liberation Sans',Arial,sans-serif;color:#2b2233;transform:translateX(0.87px) scaleX(0.9587);">release</span>
<span id="t82" class="t" style="left:1301px;top:721px;font:normal 11.4px/16px 'Liberation Sans',Arial,sans-serif;color:#80708f;transform:translateX(0.43px) scaleX(0.9887);-webkit-text-stroke:0.25px #80708f;">1.6.1 (1.6.1), com.media…</span>
<span id="t83" class="t" style="left:1436px;top:721px;font:bold 11.4px/16px 'Liberation Sans',Arial,sans-serif;color:#3e3446;transform:translateX(0.87px) scaleX(1.0084);">14%</span>

<svg class="abs" style="left:0;top:0" width="1484" height="758" viewBox="0 0 1484 758"><clipPath id="c0"><rect x="1172.0" y="358.20" width="287.2" height="13.8" rx="2"/></clipPath><g clip-path="url(#c0)"><rect x="1172.0" y="358.20" width="287.2" height="13.8" fill="#feebf9"/><rect x="1172.0" y="358.20" width="131.2" height="13.8" fill="#3a2f87"/><rect x="1302.9" y="358.20" width="72.3" height="13.8" fill="#5f40a3"/><rect x="1374.9" y="358.20" width="44.3" height="13.8" fill="#8c4fbd"/><rect x="1418.9" y="358.20" width="31.4" height="13.8" fill="#b961d3"/><rect x="1450.0" y="358.20" width="9.5" height="13.8" fill="#de76e4"/></g><clipPath id="c1"><rect x="1172.0" y="400.63" width="287.2" height="13.8" rx="2"/></clipPath><g clip-path="url(#c1)"><rect x="1172.0" y="400.63" width="287.2" height="13.8" fill="#feebf9"/><rect x="1172.0" y="400.63" width="145.2" height="13.8" fill="#3a2f87"/><rect x="1316.9" y="400.63" width="52.4" height="13.8" fill="#5f40a3"/><rect x="1369.0" y="400.63" width="43.1" height="13.8" fill="#8c4fbd"/><rect x="1411.8" y="400.63" width="29.5" height="13.8" fill="#b961d3"/><rect x="1441.0" y="400.63" width="18.5" height="13.8" fill="#de76e4"/></g><clipPath id="c2"><rect x="1172.0" y="443.06" width="287.2" height="13.8" rx="2"/></clipPath><g clip-path="url(#c2)"><rect x="1172.0" y="443.06" width="287.2" height="13.8" fill="#feebf9"/><rect x="1172.0" y="443.06" width="140.9" height="13.8" fill="#3a2f87"/><rect x="1312.6" y="443.06" width="10.6" height="13.8" fill="#5f40a3"/><rect x="1322.9" y="443.06" width="7.3" height="13.8" fill="#8c4fbd"/><rect x="1329.9" y="443.06" width="7.3" height="13.8" fill="#b961d3"/><rect x="1336.9" y="443.06" width="7.0" height="13.8" fill="#de76e4"/><rect x="1343.6" y="443.06" width="6.7" height="13.8" fill="#ef91e8"/><rect x="1350.0" y="443.06" width="7.5" height="13.8" fill="#f7b2ec"/></g><clipPath id="c3"><rect x="1172.0" y="485.49" width="287.2" height="13.8" rx="2"/></clipPath><g clip-path="url(#c3)"><rect x="1172.0" y="485.49" width="287.2" height="13.8" fill="#feebf9"/><rect x="1172.0" y="485.49" width="140.9" height="13.8" fill="#3a2f87"/><rect x="1312.6" y="485.49" width="72.6" height="13.8" fill="#5f40a3"/></g><clipPath id="c4"><rect x="1172.0" y="527.92" width="287.2" height="13.8" rx="2"/></clipPath><g clip-path="url(#c4)"><rect x="1172.0" y="527.92" width="287.2" height="13.8" fill="#feebf9"/><rect x="1172.0" y="527.92" width="116.0" height="13.8" fill="#3a2f87"/><rect x="1287.7" y="527.92" width="97.5" height="13.8" fill="#5f40a3"/></g><clipPath id="c5"><rect x="1172.0" y="570.35" width="287.2" height="13.8" rx="2"/></clipPath><g clip-path="url(#c5)"><rect x="1172.0" y="570.35" width="287.2" height="13.8" fill="#feebf9"/><rect x="1172.0" y="570.35" width="215.1" height="13.8" fill="#3a2f87"/><rect x="1386.8" y="570.35" width="72.7" height="13.8" fill="#5f40a3"/></g><clipPath id="c6"><rect x="1172.0" y="612.78" width="287.2" height="13.8" rx="2"/></clipPath><g clip-path="url(#c6)"><rect x="1172.0" y="612.78" width="287.2" height="13.8" fill="#feebf9"/><rect x="1172.0" y="612.78" width="70.1" height="13.8" fill="#3a2f87"/><rect x="1241.8" y="612.78" width="64.4" height="13.8" fill="#5f40a3"/><rect x="1305.9" y="612.78" width="45.4" height="13.8" fill="#8c4fbd"/><rect x="1351.0" y="612.78" width="20.5" height="13.8" fill="#b961d3"/><rect x="1371.2" y="612.78" width="4.3" height="13.8" fill="#de76e4"/><rect x="1375.2" y="612.78" width="7.4" height="13.8" fill="#ef91e8"/></g><clipPath id="c7"><rect x="1172.0" y="655.21" width="287.2" height="13.8" rx="2"/></clipPath><g clip-path="url(#c7)"><rect x="1172.0" y="655.21" width="287.2" height="13.8" fill="#feebf9"/><rect x="1172.0" y="655.21" width="140.9" height="13.8" fill="#3a2f87"/><rect x="1312.6" y="655.21" width="33.6" height="13.8" fill="#5f40a3"/><rect x="1345.9" y="655.21" width="19.5" height="13.8" fill="#8c4fbd"/><rect x="1365.1" y="655.21" width="4.4" height="13.8" fill="#b961d3"/><rect x="1369.2" y="655.21" width="4.9" height="13.8" fill="#de76e4"/><rect x="1373.8" y="655.21" width="4.4" height="13.8" fill="#ef91e8"/></g><clipPath id="c8"><rect x="1172.0" y="697.64" width="287.2" height="13.8" rx="2"/></clipPath><g clip-path="url(#c8)"><rect x="1172.0" y="697.64" width="287.2" height="13.8" fill="#feebf9"/><rect x="1172.0" y="697.64" width="140.9" height="13.8" fill="#3a2f87"/><rect x="1312.6" y="697.64" width="74.5" height="13.8" fill="#5f40a3"/><rect x="1386.8" y="697.64" width="40.9" height="13.8" fill="#8c4fbd"/></g><clipPath id="c9"><rect x="1172.0" y="740.07" width="287.2" height="13.8" rx="2"/></clipPath><g clip-path="url(#c9)"><rect x="1172.0" y="740.07" width="287.2" height="13.8" fill="#feebf9"/><rect x="1172.0" y="740.07" width="43.2" height="13.8" fill="#3a2f87"/><rect x="1214.9" y="740.07" width="34.3" height="13.8" fill="#5f40a3"/><rect x="1248.9" y="740.07" width="23.1" height="13.8" fill="#8c4fbd"/><rect x="1271.7" y="740.07" width="18.5" height="13.8" fill="#b961d3"/><rect x="1289.9" y="740.07" width="13.5" height="13.8" fill="#de76e4"/><rect x="1303.1" y="740.07" width="11.8" height="13.8" fill="#ef91e8"/><rect x="1314.6" y="740.07" width="8.8" height="13.8" fill="#f7b2ec"/><rect x="1323.1" y="740.07" width="9.6" height="13.8" fill="#fbcef0"/></g></svg>
</div>
</body>
</html>
